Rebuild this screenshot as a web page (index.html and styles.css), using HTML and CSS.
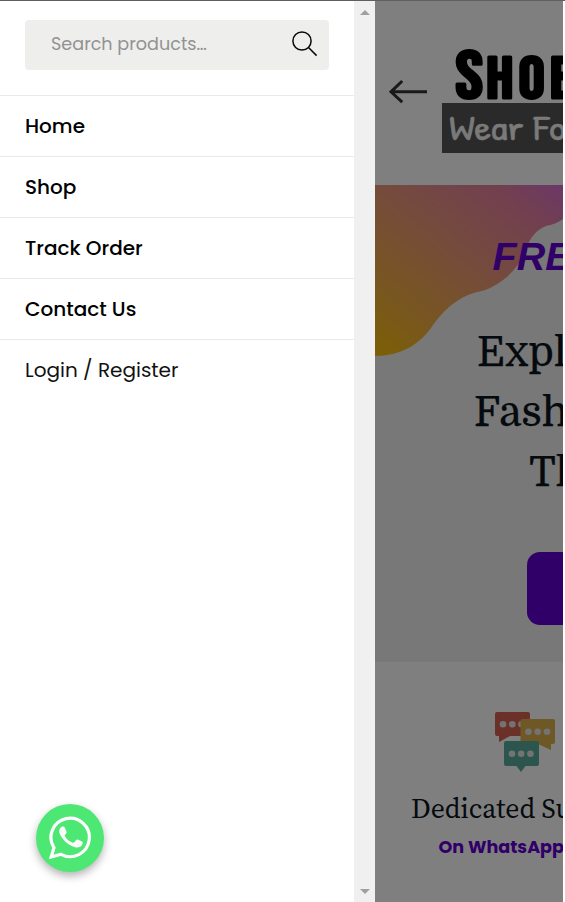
FILE: index.html
```html
<!DOCTYPE html>
<html lang="en">
<head>
<meta charset="utf-8">
<title>Shop menu</title>
<link rel="stylesheet" href="styles.css">
</head>
<body>
<div class="app">
  <aside class="drawer">
    <form class="search">
      <span class="placeholder">Search products…</span>
      <svg class="search-icon" width="26" height="26" viewBox="0 0 26 26"><circle cx="10" cy="10" r="9.1"/><path d="M16.5 16.5 24.6 24.6"/></svg>
    </form>
    <nav class="menu">
      <a class="item">Home</a>
      <a class="item">Shop</a>
      <a class="item">Track Order</a>
      <a class="item">Contact Us</a>
      <a class="item login">Login / Register</a>
    </nav>
    <a class="whatsapp">
      <svg width="44" height="44" viewBox="0 0 44 44">
        <path class="bubble" d="M3.200 41 6 31.800A19.200 19.200 0 1 1 13 38.300Z"/>
        <path class="phone" d="M12.1 12.2C13.6 10.2 16 9.9 17 12.1L18.4 15.5C18.8 16.6 18.5 17.1 17.1 18.8C16.6 19.5 16.8 20 17.4 20.9C19.5 23.8 21.5 25.4 24.7 26.7C25.5 27 26 26.7 26.6 26L28.2 24.1C28.8 23.4 29.4 23.3 30.3 23.7L34 25.5C35.1 26.1 34.9 27.2 34.3 28.6C33.4 30.8 30.4 32 27.7 31.4C23.2 30.4 18.4 27.6 14.6 22.5C11.4 18.3 10.3 15.2 12.1 12.2Z"/>
      </svg>
    </a>
  </aside>
  <div class="scrollbar">
    <svg width="10" height="5" viewBox="0 0 10 5"><path d="M0 5 5 0 10 5Z"/></svg>
    <svg width="10" height="5" viewBox="0 0 10 5"><path d="M0 0H10L5 5Z"/></svg>
  </div>
  <main class="page">
    <header class="header">
      <svg width="188" height="184" viewBox="375 1 188 184">
        <path class="arrow" d="M427 91.8H391M402.2 81 391 91.8 402.2 102.2"/>
        <rect class="tag" x="442" y="103" width="130" height="50"/>
        <text class="logo" transform="translate(455.500 97.500) scale(1.08 1)"><tspan font-size="68">S</tspan><tspan x="28.500 58.500 87.500" font-size="59.500">HOE</tspan></text>
        <text class="tagline" transform="translate(449 140) scale(1.26 1)">Wear<tspan x="67">Fo</tspan></text>
      </svg>
    </header>
    <section class="hero">
      <svg width="188" height="477" viewBox="375 185 188 477">
        <defs><linearGradient id="wave" gradientUnits="userSpaceOnUse" x1="375" y1="356" x2="540" y2="155"><stop offset="0" stop-color="#f8c008"/><stop offset=".22" stop-color="#f1ad40"/><stop offset=".55" stop-color="#e9957f"/><stop offset=".8" stop-color="#e57fa0"/><stop offset="1" stop-color="#d36ed8"/></linearGradient></defs>
        <path fill="url(#wave)" d="M375 185H563V219C556 224 550 225 546 226C536 230 530 238 527 247C520 268 502 285 482 291C464 294 447 305 433 325C420 345 400 356 375 356Z"/>
        <text class="free" x="492.500" y="270">FREE</text>
        <g class="headline"><text x="477" y="365.500">Expl</text><text x="474" y="425.500">Fash</text><text x="529" y="485.500">Th</text></g>
        <rect class="button" x="527" y="552" width="80" height="73" rx="13"/>
      </svg>
    </section>
    <section class="support">
      <svg width="188" height="240" viewBox="375 662 188 240">
        <path fill="#d66353" d="M497 712H528Q530 712 530 714V734Q530 736 528 736H510L499 742V736H497Q495 736 495 734V714Q495 712 497 712Z"/>
        <g fill="#e6e6e6"><circle cx="503" cy="724.2" r="3.3"/><circle cx="512.3" cy="724.2" r="3.3"/><circle cx="521.5" cy="724.2" r="3.3"/></g>
        <path fill="#dcb14c" d="M523 719H553Q555 719 555 721V742Q555 744 553 744H551V750L538 744H523Q520.500 744 520.500 742V721Q520.500 719 523 719Z"/>
        <g fill="#e6e6e6"><circle cx="528.4" cy="731.8" r="3.3"/><circle cx="537.7" cy="731.8" r="3.3"/><circle cx="547" cy="731.8" r="3.3"/></g>
        <path fill="#57aa9b" d="M506 741H537Q539 741 539 743V764Q539 766 537 766H525.500L521 772 516.500 766H506Q504 766 504 764V743Q504 741 506 741Z"/>
        <g fill="#e6e6e6"><circle cx="512" cy="753.8" r="3.3"/><circle cx="521.2" cy="753.8" r="3.3"/><circle cx="530.4" cy="753.8" r="3.3"/></g>
        <text class="dedicated" x="411" y="818">Dedicated Su</text>
        <text class="on" x="438.500" y="853" textLength="125.500" lengthAdjust="spacingAndGlyphs">On WhatsApp</text>
      </svg>
    </section>
    <div class="overlay"></div>
  </main>
</div>
</body>
</html>
```
FILE: styles.css
```css
* { box-sizing: border-box; }
body { margin: 0; background: #fff; font-family: Poppins, Inter, "Liberation Sans", sans-serif; }
svg { display: block; }
.app { display: flex; width: 565px; height: 902px; overflow: hidden; border-top: 1px solid #605d66; }
.drawer { position: relative; width: 354px; background: #fff; padding-top: 19px; }
.search { display: flex; align-items: center; justify-content: space-between; width: 304px; height: 50px; margin: 0 25px 25px; padding: 0 11.500px 0 26px; border-radius: 4px; background: #eeeeec; }
.placeholder { font-size: 17.600px; color: #929292; line-height: 48px; height: 50px; }
.search-icon { position: relative; top: -1px; fill: none; stroke: #080808; stroke-width: 1.5; }
.menu { display: flex; flex-direction: column; }
.item { height: 61px; border-top: 1px solid #e9e9e9; padding-left: 25px; line-height: 60px; font-size: 20px; font-weight: 500; color: #000; white-space: pre; }
.login { font-weight: 400; color: #111; }
.whatsapp { position: absolute; left: 36px; top: 803px; width: 68px; height: 68px; border-radius: 50%; background: #4de773; box-shadow: 0 4px 8px rgba(0,0,0,.3); display: grid; place-items: center; }
.bubble { fill: none; stroke: #fff; stroke-width: 3.2; }
.phone { fill: #fafafa; }
.scrollbar { width: 21px; background: #f0f0f0; display: flex; flex-direction: column; align-items: center; justify-content: space-between; padding: 9px 0 8px; fill: #a0a0a0; }
.page { position: relative; width: 188px; overflow: hidden; background: #fff; }
.hero { background: #f0f0f0; }
.overlay { position: absolute; inset: 0; background: rgba(0,0,0,.5); }
.arrow { fill: none; stroke: #333; stroke-width: 3; }
.tag { fill: #545454; }
.logo { font-family: "Bebas Neue", Roboto, sans-serif; fill: #000; stroke: #000; stroke-width: 3; stroke-linejoin: round; }
.tagline { font-family: "Patrick Hand", Lato, sans-serif; font-size: 33px; fill: #f4f4f4; stroke: #f4f4f4; stroke-width: .4; }
.free { font: italic bold 39.500px "Liberation Sans", sans-serif; fill: #6000d0; }
.headline { font-family: Domine, "Noto Serif", "DejaVu Serif", serif; font-size: 41px; fill: #0a151f; stroke: #0a151f; stroke-width: .25; }
.button { fill: #6000d0; }
.dedicated { font-family: "Source Serif Pro", "Source Serif 4", "Noto Serif", "DejaVu Serif", serif; font-size: 27.700px; fill: #0a151f; }
.on { font-family: Poppins, Inter, sans-serif; font-size: 17.400px; font-weight: 700; fill: #6000d0; }
```
